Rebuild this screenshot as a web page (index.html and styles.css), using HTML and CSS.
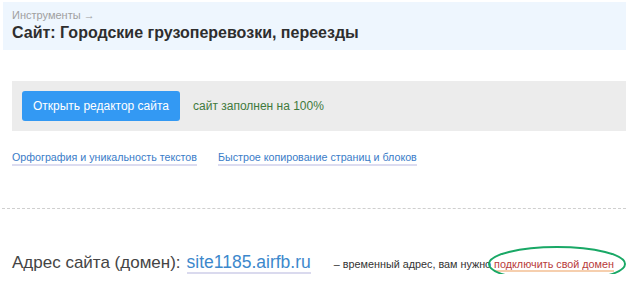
FILE: index.html
```html
<!DOCTYPE html>
<html lang="ru">
<head>
  <meta charset="UTF-8" />
  <meta name="viewport" content="width=device-width, initial-scale=1.0"/>
  <title>Сайт: Городские грузоперевозки, переезды</title>
  <link rel="stylesheet" href="styles.css">
</head>
<body>
  <div class="page-head">
    <div class="crumbs"><a href="#">Инструменты</a> &rarr;</div>
    <h1>Сайт: Городские грузоперевозки, переезды</h1>
  </div>

  <div class="editor-bar">
    <a href="#" class="editor-btn">Открыть редактор сайта</a>
    <span class="fill-status">сайт заполнен на 100%</span>
  </div>

  <div class="tools">
    <a href="#" class="dotted-link">Орфография и уникальность текстов</a>
    <a href="#" class="dotted-link">Быстрое копирование страниц и блоков</a>
  </div>

  <hr class="sep">

  <div class="domain">
    <span class="domain-label">Адрес сайта (домен):</span>
    <a href="#" class="domain-link">site1185.airfb.ru</a>
    <span class="domain-note">&ndash; временный адрес, вам нужно
      <span class="mark">
        <a href="#" class="own-domain">подключить свой домен</a>
        <!-- hand-drawn highlight around the link -->
        <svg class="ring" width="142" height="38" viewBox="0 0 142 38">
          <ellipse cx="70" cy="19" rx="68" ry="17" fill="none" stroke="#19a866" stroke-width="2"/>
        </svg>
      </span>
    </span>
  </div>
</body>
</html>
```

FILE: styles.css
```css
/* Basic resets & layout */
body {
  margin: 0;
  font-family: 'Liberation Sans', Arial, sans-serif;
  color: #333;
  background: #fff;
}

a {
  text-decoration: none;
}

.page-head {
  margin: 2px 0 0 3px;
  padding: 7px 9px 8px;
  background: #eef6fe;
}

.crumbs {
  font-size: 11px;
  line-height: 12px;
  color: #a0a0a0;
}

.crumbs a {
  color: #a0a0a0;
}

h1 {
  margin: 3px 0 0;
  font-size: 16px;
  line-height: 18px;
  font-weight: bold;
  color: #2e2e2e;
}

.editor-bar {
  display: flex;
  align-items: center;
  margin: 31px 0 0 12px;
  padding: 10px;
  height: 30px;
  background: #ececec;
}

.editor-btn {
  display: inline-block;
  width: 158px;
  height: 30px;
  line-height: 30px;
  text-align: center;
  background: #3399f3;
  color: #fff;
  font-size: 12px;
  border-radius: 3px;
}

.fill-status {
  margin-left: 13px;
  font-size: 12px;
  color: #3f7a3c;
}

.tools {
  display: flex;
  gap: 21px;
  margin: 20px 0 0 12px;
}

.dotted-link {
  font-size: 10.7px;
  line-height: 13px;
  color: #3a7cc8;
  border-bottom: 2px solid #dcdcf0;
}

.sep {
  margin: 42px 0 0 2px;
  border: none;
  border-top: 1px dashed #cfcfcf;
}

.domain {
  display: flex;
  align-items: baseline;
  white-space: nowrap;
  margin: 43px 0 0 12px;
}

.domain-label {
  font-size: 17px;
  color: #444;
}

.domain-link {
  margin-left: 6px;
  font-size: 17.5px;
  line-height: 20px;
  color: #3c88cc;
  border-bottom: 2px solid #dadaee;
}

.domain-note {
  margin-left: 23px;
  font-size: 10.8px;
  color: #333;
}

.mark {
  position: relative;
}

.own-domain {
  color: #b83a3a;
  border-bottom: 2px solid #f6cfae;
}

.ring {
  position: absolute;
  left: -7px;
  top: -13px;
}
```
